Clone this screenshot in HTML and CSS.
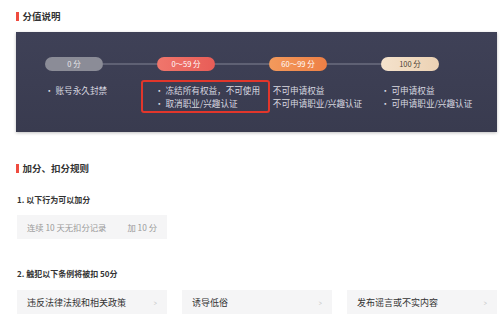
FILE: index.html
```html
<!DOCTYPE html>
<html lang="zh-CN">
<head>
    <meta charset="UTF-8">
    <title>分值说明</title>
    <link rel="stylesheet" href="styles.css">
</head>
<body>
<div class="page">
    <h2 class="sec-title">分值说明</h2>
    <div class="score-panel">
        <div class="score-col">
            <span class="pill pill-grey">0 分</span>
            <ul class="score-list">
                <li>· 账号永久封禁</li>
            </ul>
        </div>
        <div class="score-col">
            <span class="pill pill-red">0～59 分</span>
            <ul class="score-list highlight">
                <li>· 冻结所有权益，不可使用</li>
                <li>· 取消职业/兴趣认证</li>
            </ul>
        </div>
        <div class="score-col">
            <span class="pill pill-orange">60～99 分</span>
            <ul class="score-list">
                <li>&nbsp;&nbsp;不可申请权益</li>
                <li>&nbsp;&nbsp;不可申请职业/兴趣认证</li>
            </ul>
        </div>
        <div class="score-col last">
            <span class="pill pill-gold">100 分</span>
            <ul class="score-list">
                <li>· 可申请权益</li>
                <li>· 可申请职业/兴趣认证</li>
            </ul>
        </div>
    </div>

    <h2 class="sec-title sec-rules">加分、扣分规则</h2>

    <h3 class="rule-title">1. 以下行为可以加分</h3>
    <div class="rule-grid">
        <div class="rule-item plus">
            <span>连续 10 天无扣分记录</span>
            <span>加 10 分</span>
        </div>
    </div>

    <h3 class="rule-title rule-minus">2. 触犯以下条例将被扣 50分</h3>
    <div class="rule-grid">
        <a class="rule-item" href="#">违反法律法规和相关政策<i class="arr">&gt;</i></a>
        <a class="rule-item" href="#">诱导低俗<i class="arr">&gt;</i></a>
        <a class="rule-item" href="#">发布谣言或不实内容<i class="arr">&gt;</i></a>
    </div>
</div>
</body>
</html>
```

FILE: styles.css
```css
/* reset */
body,div,ul,li,h2,h3,p{margin:0;padding:0}
ul,li{list-style:none}
a{text-decoration:none;color:inherit}
i{font-style:normal}
body{font-family:"Noto Sans CJK SC","Noto Sans",sans-serif;color:#333;background:#fff}
/* //reset */

.page{
    width:481px;
    padding-left:16px;
}
.sec-title{
    display:flex;
    align-items:center;
    margin-top:10px;
    height:12px;
    font-size:9.5px;
    font-weight:600;
    line-height:12px;
    color:#333;
}
.sec-title:before{
    content:"";
    width:2.5px;
    height:9px;
    margin-right:4px;
    background:#ef4b3f;
}
.sec-rules{
    margin-top:30px;
}

/* panel */
.score-panel{
    display:flex;
    margin-top:10px;
    height:100px;
    padding:25px 0 0 29px;
    box-sizing:border-box;
    background:linear-gradient(180deg,#3f4157 0%,#393b4f 100%);
    box-shadow:0 1px 3px rgba(0,0,0,.25);
}
.score-col{
    position:relative;
    width:112px;
}
.score-col:after{
    content:"";
    position:absolute;
    left:58px;
    top:6px;
    width:54px;
    height:2px;
    background:#5f6174;
}
.score-col.last:after{
    display:none;
}
.pill{
    display:block;
    width:58px;
    height:14px;
    border-radius:7px;
    font-size:7.5px;
    line-height:14px;
    text-align:center;
    color:#fff;
}
.pill-grey{background:#8b8c97;color:#e6e6ea}
.pill-red{background:linear-gradient(90deg,#f0766c,#e85d57)}
.pill-orange{background:linear-gradient(90deg,#f39a5c,#ee7f45)}
.pill-gold{background:linear-gradient(90deg,#f4e2cc,#ecd2b4);color:#4b3e33}

.score-list{
    margin:9px 0 0 -2px;
    padding:1.5px 0 0;
    border:2px solid transparent;
    font-size:8.6px;
    line-height:13px;
    color:#d9d9e0;
    white-space:nowrap;
}
.score-list.highlight{
    margin-left:-16px;
    margin-right:-1px;
    padding-left:12px;
    height:27px;
    border-color:#e2362b;
    border-radius:3px;
}

/* rules */
.rule-title{
    margin-top:20px;
    font-size:8px;
    font-weight:600;
    line-height:12px;
    color:#333;
    padding-left:1px;
}
.rule-minus{
    margin-top:29px;
}
.rule-grid{
    display:grid;
    grid-template-columns:repeat(3,150px);
    column-gap:15px;
    margin-top:9px;
    padding-left:1px;
}
.rule-minus + .rule-grid{
    margin-top:10px;
}
.rule-item{
    display:flex;
    align-items:center;
    justify-content:space-between;
    height:24px;
    padding:0 10px;
    background:#f5f5f6;
    font-size:9px;
    color:#333;
}
.rule-item.plus{
    font-size:8.3px;
    color:#999;
}
.arr{
    color:#c4c4c4;
    font-size:8px;
    transform:scaleX(.7);
}
```
